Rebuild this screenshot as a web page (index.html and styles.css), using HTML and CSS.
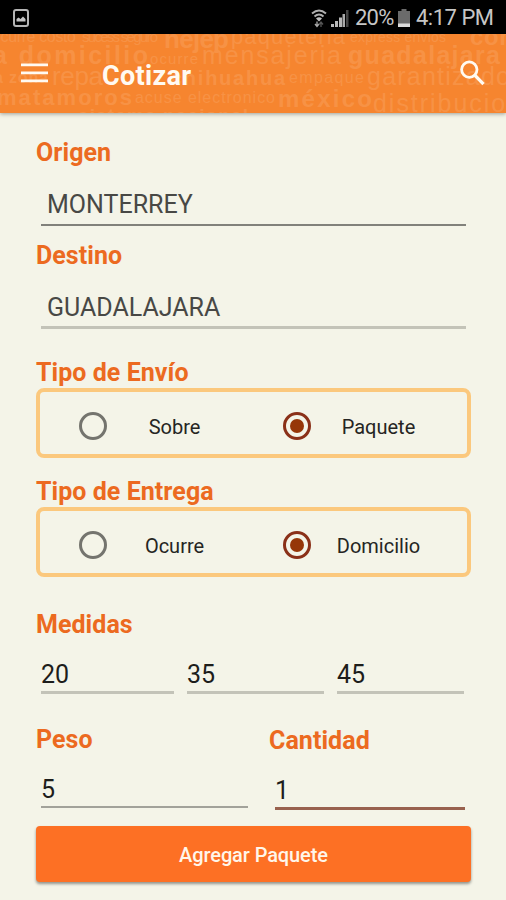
FILE: index.html
```html
<!DOCTYPE html>
<html lang="es">
<head>
    <meta charset="UTF-8">
    <meta name="viewport" content="width=device-width, initial-scale=1.0">
    <title>Cotizar</title>
    <link rel="stylesheet" href="styles.css">
</head>
<body>
    <div class="status-bar">
        <svg class="icon-picture" width="16" height="18" viewBox="0 0 16 18">
            <rect x="1" y="1" width="14" height="16" rx="2" fill="none" stroke="#b5b5b5" stroke-width="2"/>
            <path d="M3.500 12.500V10l2-1.500L7.500 10l2.500-2.500 2.500 2.500v2.500z" fill="#c4c4c4"/>
        </svg>
        <div class="status-right">
            <svg class="icon-wifi" width="16" height="19" viewBox="0 0 16 19">
                <path d="M1 4.500Q8-1.500 15 4.500M3.500 7.500Q8 3.500 12.500 7.500" fill="none" stroke="#b0b0b0" stroke-width="2"/>
                <path d="M5 9.500Q8 7 11 9.500L8 12.500z" fill="#c0c0c0"/>
                <path d="M6 17.500v-5M4 15l2 2.500 2-2.500" fill="none" stroke="#aaa" stroke-width="1.300"/>
                <path d="M10 18v-5M8 15.500l2-2.500 2 2.500" fill="none" stroke="#555" stroke-width="1.300"/>
            </svg>
            <svg class="icon-signal" width="18" height="18" viewBox="0 0 18 18">
                <path d="M0 15h3v3H0zM4 12h3v6H4zM8 8.500h3V18H8z" fill="#b8b8b8"/>
                <path d="M11.500 5h2.500v13h-2.500z" fill="#aaa"/>
                <path d="M15 1h2.500v17H15z" fill="#444"/>
            </svg>
            <span class="battery-text">20%</span>
            <svg class="icon-battery" width="12" height="18" viewBox="0 0 12 18">
                <path d="M3.500 0h5v2H12v16H0V2h3.500z" fill="#6b6b6b"/>
                <path d="M0 14.500h12V18H0z" fill="#dcdcdc"/>
            </svg>
            <span class="clock">4:17 PM</span>
        </div>
    </div>

    <header class="app-bar">
        <svg class="words" width="506" height="79" viewBox="0 0 506 79">
            <g fill="#f9a565">
                <text x="-8" y="8" font-size="16" textLength="84">ocurre costo</text>
                <text x="82" y="8" font-size="15" textLength="76">sucess seguro</text>
                <text x="164" y="14" font-size="26" font-weight="700" textLength="65">nejep</text>
                <text x="231" y="10" font-size="22" textLength="114">paqueteria</text>
                <text x="350" y="8" font-size="14" textLength="96">express envios</text>
                <text x="470" y="11" font-size="24" font-weight="700" textLength="44">con</text>
                <text x="-7" y="30" font-size="25" font-weight="700" textLength="155">a domicilio</text>
                <text x="150" y="30" font-size="15" textLength="48">ocurre</text>
                <text x="202" y="30" font-size="25" textLength="139">mensajeria</text>
                <text x="348" y="30" font-size="25" font-weight="700" textLength="152">guadalajara</text>
                <text x="-6" y="49" font-size="16" font-weight="700" textLength="54">a zona</text>
                <text x="52" y="51" font-size="26" textLength="51">repa</text>
                <text x="171" y="51" font-size="20" font-weight="700" textLength="114">chihuahua</text>
                <text x="289" y="49" font-size="16" textLength="75">empaque</text>
                <text x="367" y="51" font-size="25" textLength="143">garantizado</text>
                <text x="-3" y="71" font-size="22" font-weight="700" textLength="135">matamoros</text>
                <text x="135" y="69" font-size="16" textLength="140">acuse electronico</text>
                <text x="278" y="73" font-size="24" font-weight="700" textLength="94">méxico</text>
                <text x="373" y="78" font-size="25" textLength="148">distribucion</text>
                <text x="78" y="88" font-size="19" font-weight="700" textLength="170">sistema nacional</text>
            </g>
        </svg>
        <svg class="icon-menu" width="27" height="20" viewBox="0 0 27 20">
            <path d="M0 1.800h27M0 9.800h27M0 17.800h27" stroke="#fffaf2" stroke-width="2.800"/>
        </svg>
        <h1>Cotizar</h1>
        <svg class="icon-search" width="25" height="26" viewBox="0 0 25 26">
            <circle cx="9.300" cy="9.600" r="7.700" fill="none" stroke="#fffaf2" stroke-width="2.800"/>
            <path d="M15 15.300l8.500 8.800" stroke="#fffaf2" stroke-width="3.300"/>
        </svg>
    </header>

    <form class="form">
        <label class="title" for="origen">Origen</label>
        <input class="city dark" id="origen" type="text" value="MONTERREY">
        <label class="title destino" for="destino">Destino</label>
        <input class="city" id="destino" type="text" value="GUADALAJARA">

        <div class="title envio">Tipo de Envío</div>
        <div class="options">
            <label class="option">
                <span class="radio"></span>
                <span class="option-text">Sobre</span>
            </label>
            <label class="option">
                <span class="radio checked"></span>
                <span class="option-text">Paquete</span>
            </label>
        </div>

        <div class="title entrega">Tipo de Entrega</div>
        <div class="options">
            <label class="option">
                <span class="radio"></span>
                <span class="option-text">Ocurre</span>
            </label>
            <label class="option">
                <span class="radio checked"></span>
                <span class="option-text">Domicilio</span>
            </label>
        </div>

        <div class="title medidas">Medidas</div>
        <div class="sizes">
            <input type="text" value="20">
            <input type="text" value="35">
            <input type="text" value="45">
        </div>

        <div class="totals">
            <div class="total">
                <label class="title" for="peso">Peso</label>
                <input id="peso" type="text" value="5">
            </div>
            <div class="total cantidad">
                <label class="title" for="cantidad">Cantidad</label>
                <input class="active" id="cantidad" type="text" value="1">
            </div>
        </div>

        <button type="button">Agregar Paquete</button>
    </form>
</body>
</html>
```
FILE: styles.css
```css
* {
    box-sizing: border-box;
}
body {
    margin: 0;
    height: 900px;
    overflow: hidden;
    font-family: Roboto, "Liberation Sans", sans-serif;
    background-color: #f4f4e8;
}
.status-bar {
    display: flex;
    justify-content: space-between;
    height: 34px;
    padding: 9px 13px 0 13px;
    background-color: #000;
    color: #c6c6c6;
}
.status-right {
    display: flex;
    font-size: 22px;
    line-height: 26px;
}
.status-right span {
    margin-top: -4px;
    white-space: nowrap;
}
.icon-wifi {
    margin-right: 4px;
}
.icon-signal {
    margin-right: 6px;
}
.battery-text {
    width: 38px;
    letter-spacing: -0.8px;
}
.icon-battery {
    margin: 0 6px 0 5px;
}
.clock {
    width: 77px;
    letter-spacing: -0.5px;
}
.app-bar {
    position: relative;
    display: flex;
    align-items: flex-start;
    height: 79px;
    padding-left: 21px;
    background-color: #f6852f;
    box-shadow: 0 1px 4px rgba(0,0,0,0.35);
}
.words {
    position: absolute;
    top: 0;
    left: 0;
    font-family: "Liberation Sans", Arial, sans-serif;
    opacity: 0.42;
}
.icon-menu {
    position: relative;
    margin-top: 29px;
}
.app-bar h1 {
    position: relative;
    flex: 1;
    margin: 25px 0 0 54px;
    font-size: 27px;
    font-weight: 700;
    line-height: 34px;
    letter-spacing: 0.3px;
    color: #fffaf2;
}
.icon-search {
    position: relative;
    margin: 26px 21px 0 0;
}
.form {
    display: flex;
    flex-direction: column;
    padding: 25px 35px 0 36px;
}
.title {
    font-size: 25px;
    font-weight: 700;
    line-height: 30px;
    letter-spacing: 0.05px;
    color: #ec6a20;
}
input {
    display: block;
    width: 100%;
    height: 38px;
    padding: 0;
    border: none;
    border-bottom: 3px solid #c3c3b8;
    border-radius: 0;
    outline: none;
    background: none;
    font-family: inherit;
    font-size: 25px;
    color: #1d1d1b;
}
.city {
    width: 425px;
    height: 38px;
    margin: 20px 0 0 5px;
    padding: 0 0 3px 6px;
    color: #484845;
}
.city.dark {
    padding-bottom: 4px;
    border-bottom: 2px solid #81817b;
}
.destino {
    margin-top: 15px;
}
.envio {
    margin-top: 29px;
}
.options {
    display: flex;
    height: 70px;
    border: 4px solid #fbc87d;
    border-radius: 8px;
}
.option {
    display: flex;
    align-items: center;
    flex: 0 0 204px;
    padding-left: 39px;
}
.radio {
    display: flex;
    align-items: center;
    justify-content: center;
    width: 28px;
    height: 28px;
    margin-top: 5px;
    border: 3px solid #74746e;
    border-radius: 50%;
}
.radio.checked {
    border-color: #8a3018;
}
.radio.checked::after {
    content: "";
    width: 14px;
    height: 14px;
    border-radius: 50%;
    background-color: #963608;
}
.option-text {
    flex: 1;
    padding: 7px 2px 0 0;
    text-align: center;
    font-size: 20px;
    line-height: 24px;
    color: #252523;
}
.entrega {
    margin-top: 19px;
}
.medidas {
    margin-top: 33px;
}
.sizes {
    display: grid;
    grid-template-columns: 133px 137px 127px;
    justify-content: space-between;
    margin: 17px 7px 0 5px;
}
.sizes input {
    height: 37px;
    padding-top: 1px;
}
.totals {
    display: flex;
    margin-top: 31px;
}
.total {
    flex: 0 0 233px;
}
.total input {
    width: 207px;
    height: 35px;
    margin: 18px 0 0 5px;
    border-bottom: 2px solid #a2a29a;
}
.total.cantidad {
    flex: 0 0 202px;
    padding-top: 1px;
}
.total.cantidad input {
    width: 190px;
    height: 36px;
    margin-left: 6px;
}
.total input.active {
    padding-bottom: 1px;
    border-bottom: 3px solid #98614e;
}
button {
    height: 56px;
    margin-top: 16px;
    padding: 2px 0 0;
    border: none;
    border-radius: 4px;
    background-color: #fd7024;
    box-shadow: 0 2px 3px rgba(0,0,0,0.4);
    font-family: inherit;
    font-size: 20px;
    font-weight: 500;
    letter-spacing: -0.1px;
    color: #fff6ea;
}
```
